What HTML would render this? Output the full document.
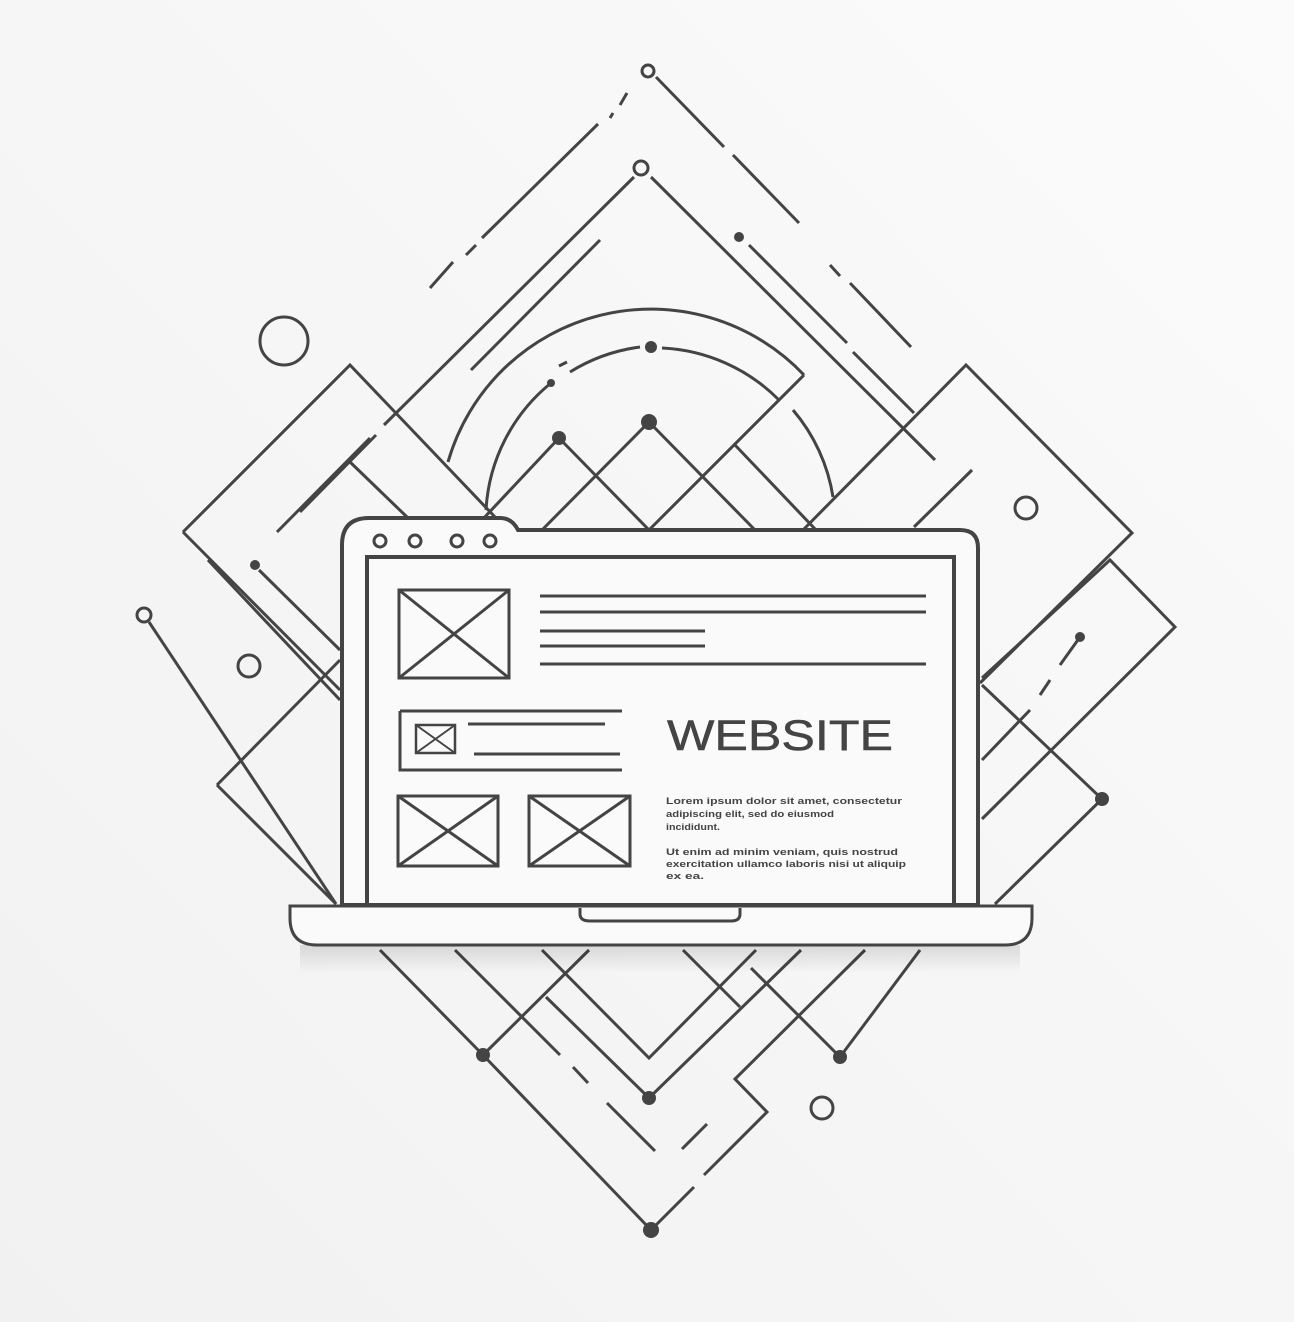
<!DOCTYPE html>
<html><head><meta charset="utf-8"><style>
html,body{margin:0;padding:0;background:#f8f8f8;}
svg{display:block}
</style></head><body>
<svg width="1294" height="1322" viewBox="0 0 1294 1322" xmlns="http://www.w3.org/2000/svg">
<defs>
<linearGradient id="bg" x1="1" y1="0" x2="0" y2="1"><stop offset="0" stop-color="#fbfbfb"/><stop offset="1" stop-color="#f1f1f1"/></linearGradient>
<linearGradient id="sh" x1="0" y1="0" x2="0" y2="1"><stop offset="0" stop-color="#000" stop-opacity="0.12"/><stop offset="1" stop-color="#000" stop-opacity="0"/></linearGradient>
</defs>
<rect width="1294" height="1322" fill="url(#bg)"/>
<g fill="none" stroke="#444" stroke-width="3" stroke-linecap="butt">
<path d="M627 93L620 105M613 113L610 118M598 124L482 238M476 245L466 255M453 262L430 288"/>
<path d="M656 77L724 147M733 155L799 223"/>
<path d="M749 245L847 343M853 352L914 413M830 265L840 276M850 283L911 347"/>
<path d="M634 177L384 425M376 435L300 512"/>
<path d="M651 177L935 460"/>
<path d="M600 240L471 370"/>
<path d="M448 462 A211 211 0 0 1 804 375"/>
<path d="M551 383 A176 176 0 0 0 486 510"/>
<path d="M559 366L567 362M640 347A176 176 0 0 0 570 372"/>
<path d="M662 348A176 176 0 0 1 779 400M793 410A176 176 0 0 1 833 497"/>
<path d="M183 532L350 365L495 517"/>
<path d="M183 532L340 690"/>
<path d="M370 438L277 532M350 462L407 517"/>
<path d="M482 520L559 438L649 530L545 530"/>
<path d="M542 530L649 422L755 530"/>
<path d="M804 375L649 530M735 445L816 530"/>
<path d="M803 530L966 365L1132 533L980 683"/>
<path d="M972 470L914 527"/>
<path d="M149 622L336 904"/>
<path d="M217 785L340 660M217 785L336 904"/>
<path d="M259 570L340 650M208 560L340 700"/>
<path d="M982 678L1110 560L1175 627L982 819"/>
<path d="M1080 637L1060 665M1050 680L1040 695M1030 710L982 760"/>
<path d="M982 685L1102 799L995 904"/>
<path d="M380 950L483 1055L651 1230L694 1187M704 1175L767 1112L735 1079L865 950"/>
<path d="M483 1055L589 950"/>
<path d="M455 950L560 1055M573 1067L588 1083"/>
<path d="M546 997L649 1098L801 950"/>
<path d="M542 950L649 1058L756 950"/>
<path d="M683 950L740 1007"/>
<path d="M751 968L840 1057L920 950"/>
<path d="M607 1103L655 1151M682 1149L707 1124"/>
</g>
<g fill="none" stroke="#444" stroke-width="3">
<circle cx="648" cy="71" r="6" fill="#f7f7f7"/>
<circle cx="641" cy="168" r="7" fill="#f7f7f7"/>
<circle cx="284" cy="341" r="24"/>
<circle cx="1026" cy="508" r="11"/>
<circle cx="144" cy="615" r="7"/>
<circle cx="249" cy="666" r="11"/>
<circle cx="822" cy="1108" r="11"/>
</g>
<g fill="#444">
<circle cx="739" cy="237" r="5"/>
<circle cx="651" cy="347" r="6"/>
<circle cx="551" cy="383" r="4"/>
<circle cx="559" cy="438" r="7"/>
<circle cx="649" cy="422" r="8"/>
<circle cx="255" cy="565" r="5"/>
<circle cx="1080" cy="637" r="5"/>
<circle cx="1102" cy="799" r="7"/>
<circle cx="483" cy="1055" r="7"/>
<circle cx="649" cy="1098" r="7"/>
<circle cx="840" cy="1057" r="7"/>
<circle cx="651" cy="1230" r="8"/>
</g>
<rect x="300" y="945" width="720" height="28" fill="url(#sh)"/>
<path d="M342 905V545Q342 518 369 518H500Q512 518 518 530H960Q978 530 978 548V905Z" fill="#fafafa" stroke="#444" stroke-width="4"/>
<rect x="367" y="557" width="587" height="348" fill="#fafafa" stroke="#444" stroke-width="4"/>
<g fill="none" stroke="#444" stroke-width="3">
<circle cx="380" cy="541" r="6"/><circle cx="415" cy="541" r="6"/><circle cx="457" cy="541" r="6"/><circle cx="490" cy="541" r="6"/>
</g>
<path d="M290 906H1032V918Q1032 945 1005 945H317Q290 945 290 918Z" fill="#fafafa" stroke="#444" stroke-width="3"/>
<path d="M580 908V914Q580 921 590 921H731Q740 921 740 914V908" fill="none" stroke="#444" stroke-width="3"/>
<g fill="none" stroke="#444" stroke-width="3">
<rect x="399" y="590" width="110" height="88"/><path d="M399 590L509 678M509 590L399 678"/>
<path d="M540 596H926M540 612H926M540 631H705M540 646H705M540 664H926"/>
<path d="M400 711H622M400 711V770H622M468 724H605M474 754H620"/>
<rect x="416" y="725" width="39" height="28" stroke-width="2.5"/><path d="M416 725L455 753M455 725L416 753" stroke-width="2"/>
<rect x="398" y="796" width="100" height="70"/><path d="M398 796L498 866M498 796L398 866"/>
<rect x="529" y="796" width="101" height="70"/><path d="M529 796L630 866M630 796L529 866"/>
</g>
<text x="667" y="750" font-family="Liberation Sans, sans-serif" font-size="43" fill="#444" stroke="#444" stroke-width="0.5" textLength="226" lengthAdjust="spacingAndGlyphs">WEBSITE</text>
<g font-family="Liberation Sans, sans-serif" font-size="9" fill="#444" font-weight="bold" lengthAdjust="spacingAndGlyphs">
<text x="666" y="804" textLength="236" lengthAdjust="spacingAndGlyphs">Lorem ipsum dolor sit amet, consectetur</text>
<text x="666" y="817" textLength="168" lengthAdjust="spacingAndGlyphs">adipiscing elit, sed do eiusmod</text>
<text x="666" y="830" textLength="54" lengthAdjust="spacingAndGlyphs">incididunt.</text>
<text x="666" y="855" textLength="232" lengthAdjust="spacingAndGlyphs">Ut enim ad minim veniam, quis nostrud</text>
<text x="666" y="867" textLength="240" lengthAdjust="spacingAndGlyphs">exercitation ullamco laboris nisi ut aliquip</text>
<text x="666" y="879" textLength="38" lengthAdjust="spacingAndGlyphs">ex ea.</text>
</g>
</svg>
</body></html>
